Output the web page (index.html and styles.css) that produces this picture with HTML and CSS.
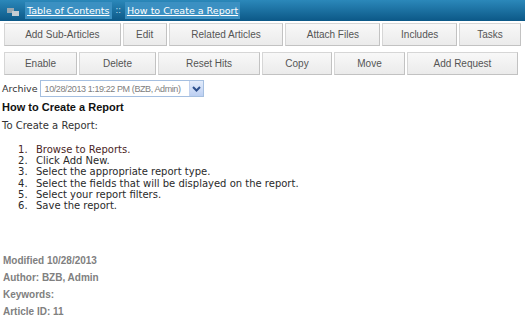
FILE: index.html
```html
<!DOCTYPE html>
<html lang="en">
<head>
  <meta charset="UTF-8">
  <title>How to Create a Report</title>
  <link rel="stylesheet" href="styles.css">
</head>
<body>
  <div class="crumbs">
    <svg class="crumb-icon" width="12" height="8" viewBox="0 0 12 8">
      <rect x="0" y="0" width="7" height="5" fill="#9aa7b0"/>
      <rect x="5" y="3" width="7" height="5" fill="#c4ccd2"/>
    </svg>
    <a class="crumb" href="#">Table of Contents</a>
    <span class="crumb-sep">::</span>
    <a class="crumb" href="#">How to Create a Report</a>
  </div>

  <div class="toolbar">
    <button class="btn w117">Add Sub-Articles</button>
    <button class="btn w44">Edit</button>
    <button class="btn w115">Related Articles</button>
    <button class="btn w95">Attach Files</button>
    <button class="btn w75">Includes</button>
    <button class="btn w62">Tasks</button>
  </div>
  <div class="toolbar">
    <button class="btn w73">Enable</button>
    <button class="btn w77">Delete</button>
    <button class="btn w102">Reset Hits</button>
    <button class="btn w70">Copy</button>
    <button class="btn w71">Move</button>
    <button class="btn w111">Add Request</button>
  </div>

  <div class="archive">
    <span class="archive-label">Archive</span>
    <div class="select">
      <span class="select-text">10/28/2013 1:19:22 PM (BZB, Admin)</span>
      <span class="select-arrow">
        <svg width="9" height="6" viewBox="0 0 9 6"><path d="M1 1 L4.5 4.5 L8 1" fill="none" stroke="#2c4f8c" stroke-width="2"/></svg>
      </span>
    </div>
  </div>

  <h1 class="title">How to Create a Report</h1>
  <p class="intro">To Create a Report:</p>

  <ol class="steps">
    <li class="first">Browse to Reports.</li>
    <li>Click Add New.</li>
    <li>Select the appropriate report type.</li>
    <li>Select the fields that will be displayed on the report.</li>
    <li>Select your report filters.</li>
    <li>Save the report.</li>
  </ol>

  <div class="meta">
    <div>Modified 10/28/2013</div>
    <div>Author: BZB, Admin</div>
    <div>Keywords:</div>
    <div>Article ID: 11</div>
  </div>
</body>
</html>
```

FILE: styles.css
```css
* {
  box-sizing: border-box;
}
body {
  margin: 0;
  background: #fff;
  font-family: "DejaVu Sans", Verdana, sans-serif;
  font-size: 10px;
  color: #222;
}

/* breadcrumb bar */
.crumbs {
  height: 21px;
  display: flex;
  align-items: center;
  padding-left: 7px;
  background: linear-gradient(#2b88ba, #0c5887);
}
.crumb-icon {
  margin-top: 3px;
  margin-right: 6px;
}
.crumb {
  display: block;
  height: 17px;
  line-height: 17px;
  padding: 0 2px;
  background: #3b90c2;
  color: #fff;
  font-size: 9.5px;
}
.crumb-sep {
  color: #cfe3f0;
  font-size: 8px;
  padding: 0 4px;
}

/* button rows */
.toolbar {
  display: flex;
  gap: 2px;
  padding: 0 4px;
  margin-top: 2px;
}
.toolbar + .toolbar {
  margin-top: 6px;
}
.btn {
  height: 23px;
  border: 1px solid #d6d6d6;
  border-right-color: #c2c2c2;
  border-bottom-color: #c2c2c2;
  background: linear-gradient(#f8f8f8, #ebebeb);
  font-family: "Liberation Sans", Arial, sans-serif;
  font-size: 10px;
  color: #555;
  padding: 0;
}
.w117 { width: 117px; }
.w44 { width: 44px; }
.w115 { width: 115px; }
.w95 { width: 95px; }
.w75 { width: 75px; }
.w62 { width: 62px; }
.w73 { width: 73px; }
.w77 { width: 77px; }
.w102 { width: 102px; }
.w70 { width: 70px; }
.w71 { width: 71px; }
.w111 { width: 111px; }

/* archive select */
.archive {
  display: flex;
  align-items: center;
  margin-top: 5px;
  padding-left: 2px;
}
.archive-label {
  color: #333;
  font-size: 9.5px;
  margin-right: 2px;
}
.select {
  width: 164px;
  height: 17px;
  display: flex;
  align-items: center;
  border: 1px solid #a5bfe0;
  background: #fff;
}
.select-text {
  flex: 1;
  padding-left: 4px;
  font-family: "Liberation Sans", Arial, sans-serif;
  font-size: 9px;
  letter-spacing: -0.4px;
  color: #808080;
  white-space: nowrap;
  overflow: hidden;
}
.select-arrow {
  width: 14px;
  height: 15px;
  display: flex;
  align-items: center;
  justify-content: center;
  background: linear-gradient(#e3ecfb, #bccff2);
  border-left: 1px solid #c4d3ee;
}

/* article */
.title {
  margin: 3px 0 0 2px;
  font-family: "Liberation Sans", Arial, sans-serif;
  font-size: 11px;
  font-weight: bold;
  line-height: 14px;
  color: #111;
}
.intro {
  margin: 6px 0 0 2px;
  color: #333;
}
.steps {
  margin: 13px 0 0 0;
  padding-left: 36px;
  list-style: none;
  counter-reset: step;
  line-height: 11.2px;
  color: #2a2a2a;
}
.steps li {
  counter-increment: step;
}
.steps li::before {
  content: counter(step) ".";
  display: inline-block;
  width: 18px;
  margin-left: -18px;
}
.steps .first {
  color: #4a2525;
}

.meta {
  margin-top: 41px;
  padding-left: 3px;
  font-family: "Liberation Sans", Arial, sans-serif;
  font-size: 10px;
  font-weight: bold;
  line-height: 17px;
  color: #808080;
}
```
